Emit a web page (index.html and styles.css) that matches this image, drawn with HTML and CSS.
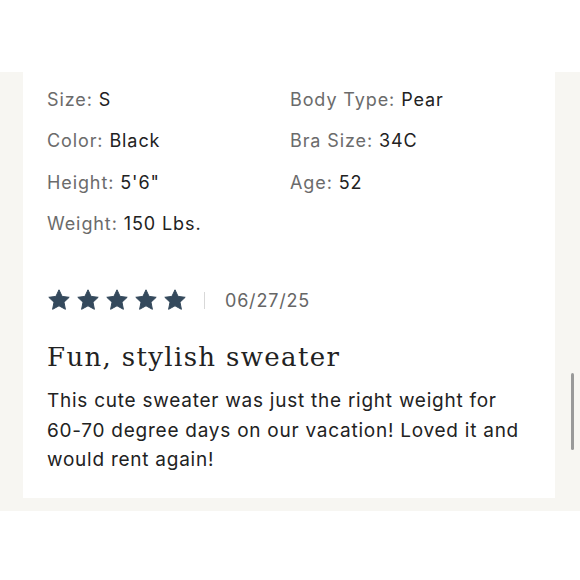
FILE: index.html
```html
<!DOCTYPE html>
<html>
<head>
<meta charset="utf-8">
<link rel="stylesheet" href="styles.css">
</head>
<body>
<div class="top"></div>
<section class="band">
  <div class="card">
    <div class="specs">
      <div class="spec"><span class="lbl">Size:</span> <span class="val">S</span></div>
      <div class="spec"><span class="lbl">Body Type:</span> <span class="val">Pear</span></div>
      <div class="spec"><span class="lbl">Color:</span> <span class="val">Black</span></div>
      <div class="spec"><span class="lbl">Bra Size:</span> <span class="val">34C</span></div>
      <div class="spec"><span class="lbl">Height:</span> <span class="val">5'6"</span></div>
      <div class="spec"><span class="lbl">Age:</span> <span class="val">52</span></div>
      <div class="spec"><span class="lbl">Weight:</span> <span class="val">150 Lbs.</span></div>
    </div>
    <div class="rating">
      <div class="stars">
        <svg class="star" viewBox="0 0 24 24"><path d="M12 1.8l3.1 6.6 7.1.9-5.2 4.9 1.4 7.1L12 17.8l-6.4 3.5 1.4-7.1L1.8 9.3l7.1-.9z" stroke-linejoin="round"/></svg>
        <svg class="star" viewBox="0 0 24 24"><path d="M12 1.8l3.1 6.6 7.1.9-5.2 4.9 1.4 7.1L12 17.8l-6.4 3.5 1.4-7.1L1.8 9.3l7.1-.9z" stroke-linejoin="round"/></svg>
        <svg class="star" viewBox="0 0 24 24"><path d="M12 1.8l3.1 6.6 7.1.9-5.2 4.9 1.4 7.1L12 17.8l-6.4 3.5 1.4-7.1L1.8 9.3l7.1-.9z" stroke-linejoin="round"/></svg>
        <svg class="star" viewBox="0 0 24 24"><path d="M12 1.8l3.1 6.6 7.1.9-5.2 4.9 1.4 7.1L12 17.8l-6.4 3.5 1.4-7.1L1.8 9.3l7.1-.9z" stroke-linejoin="round"/></svg>
        <svg class="star" viewBox="0 0 24 24"><path d="M12 1.8l3.1 6.6 7.1.9-5.2 4.9 1.4 7.1L12 17.8l-6.4 3.5 1.4-7.1L1.8 9.3l7.1-.9z" stroke-linejoin="round"/></svg>
      </div>
      <span class="sep"></span>
      <span class="date">06/27/25</span>
    </div>
    <h2 class="title">Fun, stylish sweater</h2>
    <p class="body">This cute sweater was just the right weight for 60-&#8288;70 degree days on our vacation! Loved it and would rent again!</p>
  </div>
  <div class="scrollbar"></div>
</section>
</body>
</html>
```

FILE: styles.css
```css
html, body {
  margin: 0;
  padding: 0;
  background: #ffffff;
}
body {
  font-family: Inter, "Liberation Sans", sans-serif;
  color: #222;
}
.top {
  height: 72px;
}
.band {
  position: relative;
  background: #f7f6f2;
  padding: 0 25px 13px 23px;
}
.card {
  background: #ffffff;
  padding: 7px 24px 23px 24px;
}
.specs {
  display: grid;
  grid-template-columns: 243px 1fr;
  grid-auto-rows: 41.3px;
  align-items: center;
}
.spec {
  font-size: 18px;
  letter-spacing: 0.9px;
}
.lbl {
  color: #6b6b6b;
}
.val {
  color: #222;
}
.rating {
  display: flex;
  align-items: center;
  margin-top: 41px;
  height: 30px;
}
.stars {
  display: flex;
  gap: 5px;
}
.star {
  width: 24px;
  height: 24px;
  fill: #34495c;
  stroke: #34495c;
  stroke-width: 1;
}
.sep {
  width: 1px;
  height: 17px;
  background: #d8d8d8;
  margin: 0 20px 0 17px;
}
.date {
  font-size: 18px;
  color: #666;
  letter-spacing: 0.8px;
}
.title {
  font-family: "DejaVu Serif", serif;
  font-weight: normal;
  font-size: 26px;
  letter-spacing: 1.35px;
  color: #222;
  margin: 25px 0 0 0;
  line-height: 34px;
}
.body {
  margin: 12px 0 0 0;
  font-size: 19px;
  line-height: 29.5px;
  color: #222;
  letter-spacing: 0.75px;
}
.scrollbar {
  position: absolute;
  right: 6px;
  top: 301px;
  width: 3px;
  height: 77px;
  background: #9a9a9a;
  border-radius: 2px;
}
```
